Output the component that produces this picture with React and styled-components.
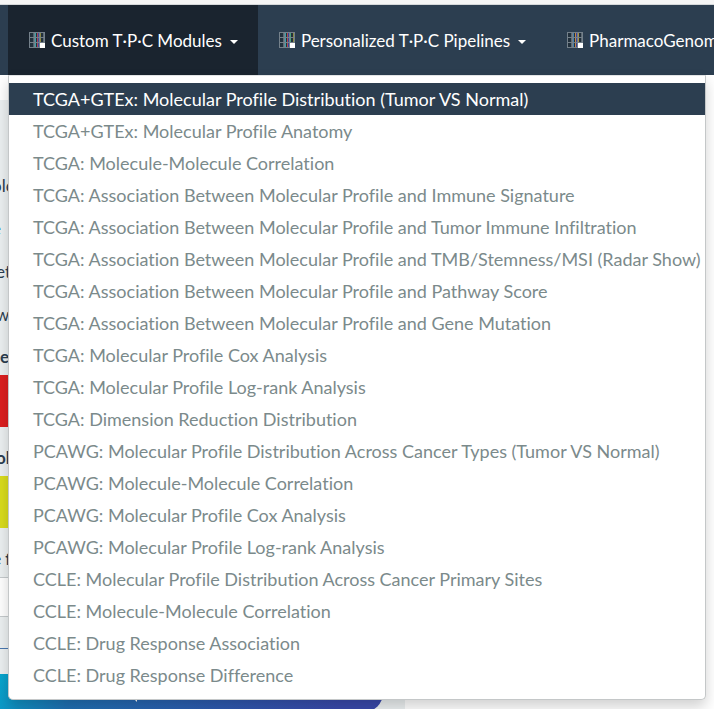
import React from "react";
import styled, { createGlobalStyle } from "styled-components";

const GlobalStyle = createGlobalStyle`
  *, *::before, *::after { box-sizing: border-box; }
  body {
    margin: 0;
    background: #fff;
    font-family: Lato, "Liberation Sans", sans-serif;
    font-size: 17px;
    font-variant-ligatures: none;
    color: #2c3e50;
  }
`;

const Page = styled.div`
  height: 100vh;
  overflow: hidden;
  display: flex;
  flex-direction: column;
`;

const TopStrip = styled.div`
  flex: none;
  height: 5px;
  background: #f5f5f5;
  border-bottom: 1px solid #d5d8da;
`;

const Navbar = styled.nav`
  position: relative;
  z-index: 2;
  flex: none;
  display: flex;
  height: 70px;
  padding-left: 8px;
  background: #2c3e50;
`;

const NavItem = styled.div`
  position: relative;
  flex: none;
`;

const NavButton = styled.button`
  display: flex;
  align-items: center;
  height: 100%;
  padding: 0 20px;
  border: 0;
  background: ${(p) => (p.$open ? "#1a242f" : "transparent")};
  color: #fff;
  font: inherit;
  font-variant-ligatures: none;
  white-space: nowrap;
  cursor: pointer;
`;

const NavIcon = styled.svg`
  width: 18px;
  height: 18px;
  margin-right: 5px;
`;

const Caret = styled.span`
  margin: 3px 0 0 8px;
  border-top: 4px solid #fff;
  border-left: 4px solid transparent;
  border-right: 4px solid transparent;
`;

const Menu = styled.ul`
  position: absolute;
  top: 100%;
  left: 0;
  margin: 0;
  padding: 7px 0 8px;
  list-style: none;
  background: #fff;
  border: 1px solid #c4c7c8;
  border-top-color: #e2e4e5;
  border-radius: 0 0 5px 5px;
  box-shadow: 0 7px 14px rgba(0, 0, 0, 0.18);
`;

const MenuLink = styled.a`
  display: block;
  padding: 0 4px 0 24px;
  font-size: 18px;
  line-height: 32px;
  white-space: nowrap;
  text-decoration: none;
  background: ${(p) => (p.$active ? "#2c3e50" : "transparent")};
  color: ${(p) => (p.$active ? "#fff" : "#7b8a8b")};
`;

const Sidebar = styled.aside`
  flex: none;
  display: flex;
  flex-direction: column;
  width: 405px;
  margin-top: 25px;
  padding-top: 64px;
  background: #ecf0f1;
`;

const Line = styled.div`
  line-height: 43px;
  white-space: nowrap;
  text-indent: ${(p) => p.$shift || 0}px;
`;

const HelpLink = styled.a`
  color: #2372c4;
  text-decoration: none;
`;

const Label = styled.label`
  display: block;
  margin: ${(p) => p.$before}px 0 8px;
  font-weight: 700;
  line-height: 20px;
  white-space: nowrap;
  text-indent: ${(p) => p.$shift || 0}px;
`;

const Swatch = styled.div`
  height: 52px;
  margin-right: 24px;
  background: ${(p) => p.$color};
`;

const FieldInput = styled.input`
  height: 40px;
  margin: 0 24px 31px 0;
  border: 1px solid #c5cacc;
  border-left: 0;
  background: #fff;
  font: inherit;
`;

const Rule = styled.hr`
  width: 100%;
  margin: 0 0 25px;
  border: 0;
  border-top: 1px solid #4978b0;
`;

const GoButton = styled.button`
  display: flex;
  align-items: center;
  justify-content: center;
  gap: 6px;
  height: 38px;
  margin: 0 22px 0 -80px;
  border: 0;
  border-radius: 19px;
  background: linear-gradient(120deg, #00b5d5 12%, #1f6fb2 34%, #3949ab 90%);
  color: #fff;
  font: inherit;
`;

const FRINGES = {
  red: ["#4f6570", "#3fa0a8", "#a84a5c", "#3f4d9a", "#8c8a45", "#5d6a74"],
  blue: ["#5d6a74", "#3fa0a8", "#b0504f", "#39419a", "#4aa07c", "#8c8a45"],
  amber: ["#5d6a74", "#4a7fa8", "#c08a45", "#39419a", "#a8924a", "#5d6a74"],
};

function GridIcon({ tone }) {
  const xs = [5, 7, 9, 10, 12, 15];
  return (
    <NavIcon viewBox="0 0 18 18" aria-hidden="true">
      <rect x="1" y="1" width="16" height="16" fill="#74808a" />
      {[2, 7, 12].map((y) => (
        <g key={y}>
          {[2, 7, 12].map((x) => (
            <rect key={x} x={x} y={y} width="4" height="4" fill="#22303c" />
          ))}
          {xs.map((x, i) => (
            <rect key={x} x={x} y={y} width="1" height="4" fill={FRINGES[tone][i]} />
          ))}
        </g>
      ))}
      <rect x="12" y="12" width="5" height="5" fill="#fff" />
    </NavIcon>
  );
}

const MODULES = [
  "TCGA+GTEx: Molecular Profile Distribution (Tumor VS Normal)",
  "TCGA+GTEx: Molecular Profile Anatomy",
  "TCGA: Molecule-Molecule Correlation",
  "TCGA: Association Between Molecular Profile and Immune Signature",
  "TCGA: Association Between Molecular Profile and Tumor Immune Infiltration",
  "TCGA: Association Between Molecular Profile and TMB/Stemness/MSI (Radar Show)",
  "TCGA: Association Between Molecular Profile and Pathway Score",
  "TCGA: Association Between Molecular Profile and Gene Mutation",
  "TCGA: Molecular Profile Cox Analysis",
  "TCGA: Molecular Profile Log-rank Analysis",
  "TCGA: Dimension Reduction Distribution",
  "PCAWG: Molecular Profile Distribution Across Cancer Types (Tumor VS Normal)",
  "PCAWG: Molecule-Molecule Correlation",
  "PCAWG: Molecular Profile Cox Analysis",
  "PCAWG: Molecular Profile Log-rank Analysis",
  "CCLE: Molecular Profile Distribution Across Cancer Primary Sites",
  "CCLE: Molecule-Molecule Correlation",
  "CCLE: Drug Response Association",
  "CCLE: Drug Response Difference",
];

export default function App() {
  return (
    <Page>
      <GlobalStyle />
      <TopStrip />
      <Navbar>
        <NavItem>
          <NavButton type="button" $open aria-expanded="true">
            <GridIcon tone="red" />
            Custom T·P·C Modules
            <Caret />
          </NavButton>
          <Menu>
            {MODULES.map((name, i) => (
              <li key={name}>
                <MenuLink href="#" $active={i === 0}>{name}</MenuLink>
              </li>
            ))}
          </Menu>
        </NavItem>
        <NavItem>
          <NavButton type="button">
            <GridIcon tone="blue" />
            Personalized T·P·C Pipelines
            <Caret />
          </NavButton>
        </NavItem>
        <NavItem>
          <NavButton type="button">
            <GridIcon tone="amber" />
            PharmacoGenomics
            <Caret />
          </NavButton>
        </NavItem>
      </Navbar>
      <Sidebar>
        <Line $shift={-8}>olo</Line>
        <Line $shift={-8}><HelpLink href="#">e</HelpLink></Line>
        <Line $shift={-4}>et</Line>
        <Line $shift={-4}>w</Line>
        <Label as="div" $before={11}>e</Label>
        <Swatch $color="#dc1f1f" />
        <Label as="div" $before={21} $shift={-4}>ol</Label>
        <Swatch $color="#d9dc1c" />
        <Label htmlFor="field" $before={21} $shift={-8}>e f</Label>
        <FieldInput id="field" />
        <Rule />
        <GoButton type="button">
          <svg width="16" height="18" viewBox="0 0 16 18" aria-hidden="true">
            <path d="M1 1h14L10 8v10L6 14V8z" fill="#fff" />
          </svg>
          Go!
        </GoButton>
      </Sidebar>
    </Page>
  );
}
